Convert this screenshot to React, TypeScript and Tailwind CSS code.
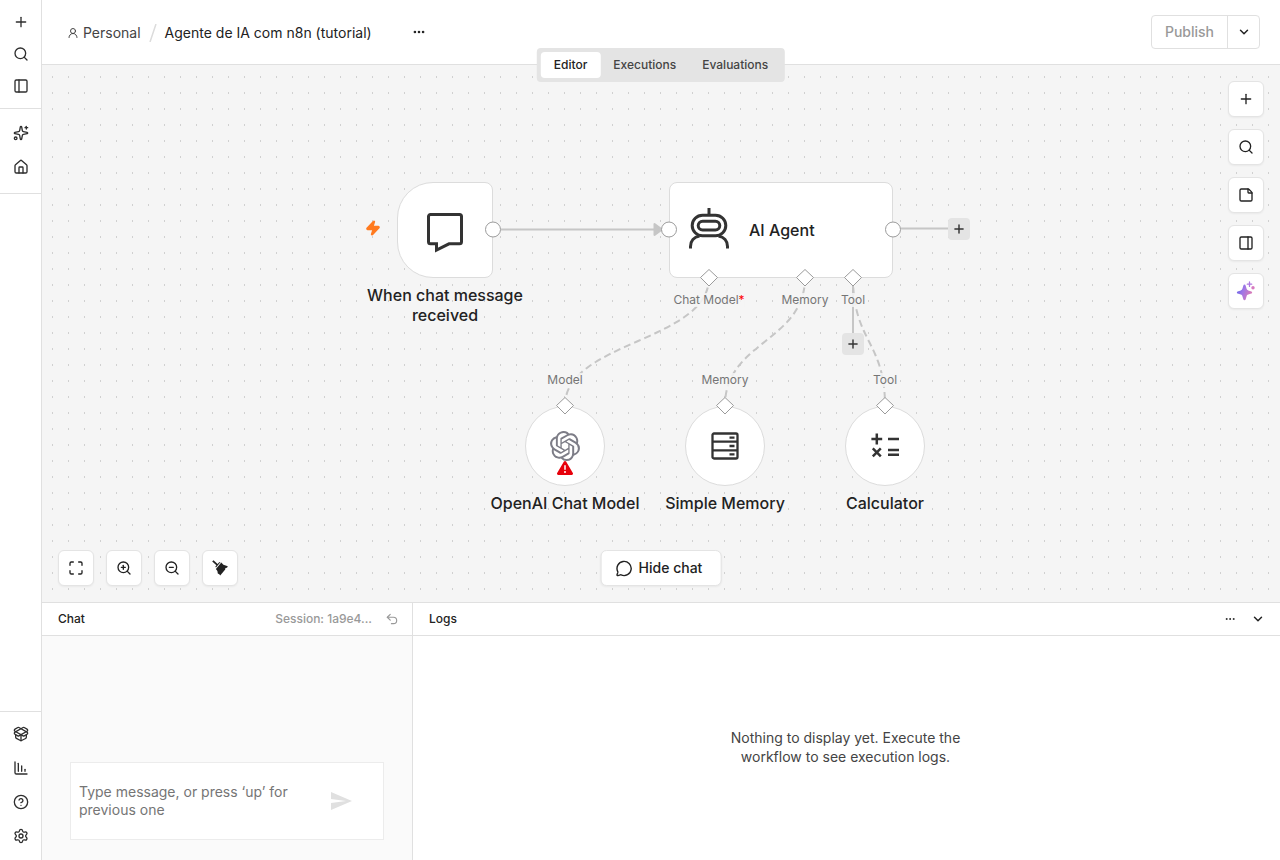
import React from 'react';
import {
  ChartColumnDecreasing,
  ChevronDown,
  CircleHelp,
  Ellipsis,
  House,
  Maximize,
  MessageCircle,
  PackageOpen,
  PanelLeft,
  PanelRight,
  Plus,
  Search,
  Settings,
  Sparkles,
  StickyNote,
  Undo2,
  UserRound,
  Zap,
  ZoomIn,
  ZoomOut,
  type LucideIcon,
} from 'lucide-react';
import { SiOpenai } from 'react-icons/si';
import { FaTriangleExclamation } from 'react-icons/fa6';
import { MdSend } from 'react-icons/md';

function RailButton({ icon: Icon, label }: { icon: LucideIcon; label: string }) {
  return (
    <button type="button" aria-label={label} className="flex size-8 items-center justify-center text-[#2e2e2e]">
      <Icon size={16} strokeWidth={2} />
    </button>
  );
}

function Rail() {
  return (
    <nav aria-label="Main" className="flex w-[42px] shrink-0 flex-col border-r border-[#e0e0e0] bg-white">
      <div className="flex flex-col items-center border-b border-[#e0e0e0] pt-1.5 pb-1.5">
        <RailButton icon={Plus} label="Create" />
        <RailButton icon={Search} label="Search" />
        <RailButton icon={PanelLeft} label="Toggle sidebar" />
      </div>
      <div className="flex flex-col items-center gap-0.5 border-b border-[#e0e0e0] pt-2 pb-2.5">
        <RailButton icon={Sparkles} label="Assistant" />
        <RailButton icon={House} label="Home" />
      </div>
      <div className="grow" />
      <div className="flex flex-col items-center gap-0.5 border-t border-[#e0e0e0] pt-1.5 pb-2">
        <RailButton icon={PackageOpen} label="Templates" />
        <RailButton icon={ChartColumnDecreasing} label="Insights" />
        <RailButton icon={CircleHelp} label="Help" />
        <RailButton icon={Settings} label="Settings" />
      </div>
    </nav>
  );
}

function Header() {
  return (
    <header className="relative z-10 flex h-[65px] shrink-0 items-center border-b border-[#e0e0e0] bg-white pr-5 pl-[25px]">
      <div className="flex items-center pt-0.5">
        <a href="#personal" className="flex items-center gap-1 text-sm text-[#444]">
          <UserRound size={12} strokeWidth={2} />
          Personal
        </a>
        <svg className="mx-2 h-[18px] w-2" viewBox="0 0 8 18" aria-hidden="true">
          <path d="M7 0 L1 18" stroke="#dcdcdc" strokeWidth="1.500" />
        </svg>
        <h1 className="text-sm text-[#222]">Agente de IA com n8n (tutorial)</h1>
      </div>
      <button type="button" aria-label="Workflow actions" className="ml-10 text-[#222]">
        <Ellipsis size={14} strokeWidth={2.5} />
      </button>
      <div className="ml-auto flex h-[34px] rounded border border-[#e0e0e0] text-sm font-medium">
        <button type="button" className="border-r border-[#e0e0e0] px-[13px] text-[#999]">
          Publish
        </button>
        <button type="button" aria-label="Publish options" className="flex w-[31px] items-center justify-center text-[#222]">
          <ChevronDown size={14} strokeWidth={2.5} />
        </button>
      </div>
      <div className="absolute top-12 left-1/2 flex -translate-x-1/2 rounded bg-[#e4e4e4] p-1 text-xs font-medium text-[#444]">
        <button type="button" className="h-[26px] rounded bg-white px-[13px] text-[#222]">
          Editor
        </button>
        <button type="button" className="h-[26px] px-[13px]">
          Executions
        </button>
        <button type="button" className="h-[26px] px-[13px]">
          Evaluations
        </button>
      </div>
    </header>
  );
}

function ToolButton({ label, children }: { label: string; children: React.ReactNode }) {
  return (
    <button
      type="button"
      aria-label={label}
      className="flex size-9 items-center justify-center rounded-md border border-[#e4e4e4] bg-white text-[#222] shadow-xs"
    >
      {children}
    </button>
  );
}

function BroomIcon() {
  return (
    <svg width="16" height="16" viewBox="0 0 16 16" fill="currentColor" aria-hidden="true">
      <path d="M0.200 1.500 1.500 0.200 5.600 3.900 7.200 2.300 8.600 2 4 7.600 3.300 6.700 4.400 5.300Z" />
      <path d="M9.300 2.600 11.400 4.800 15.800 6.200 15 7.700 13.400 7.900 13.200 9.600 8.200 15.600 7.300 14.200 5.800 13.400 5.400 11 3.900 9Z" />
    </svg>
  );
}

function AssistantIcon() {
  return (
    <svg width="20" height="20" viewBox="0 0 20 20" aria-hidden="true">
      <defs>
        <linearGradient id="assistant" x1="0" y1="0" x2="1" y2="0.400">
          <stop offset="0" stopColor="#5b60e8" />
          <stop offset="0.500" stopColor="#a077e6" />
          <stop offset="1" stopColor="#d77bb8" />
        </linearGradient>
      </defs>
      <path
        d="M8.500 3.500c.6 0 .9.400 1.100 1l1 3.300c.3.900.7 1.300 1.600 1.600l3.200 1c1 .3 1 1.900 0 2.200l-3.200 1c-.9.300-1.300.7-1.600 1.600l-1 3.300c-.3 1-1.900 1-2.200 0l-1-3.300c-.3-.9-.7-1.300-1.600-1.600l-3.200-1c-1-.3-1-1.900 0-2.200l3.200-1c.9-.3 1.300-.7 1.600-1.600l1-3.300c.2-.6.500-1 1.100-1Z"
        fill="url(#assistant)"
      />
      <path d="M13.500 1v4.400M11.300 3.200h4.400" stroke="#ae78e0" strokeWidth="1.300" strokeLinecap="round" />
      <circle cx="17" cy="6.800" r="1.700" fill="#d77bc0" />
    </svg>
  );
}

const centers = {
  agentPorts: [667, 763, 811],
  models: [523, 683, 843],
};

function Edges() {
  return (
    <svg className="absolute inset-0 size-full" aria-hidden="true">
      <defs>
        <pattern id="dots" x="10" y="11" width="16" height="16" patternUnits="userSpaceOnUse">
          <rect width="1" height="2" fill="#d0d0d0" />
        </pattern>
      </defs>
      <rect width="100%" height="100%" fill="url(#dots)" />
      <g stroke="#c6c6c6" strokeWidth="2" fill="none">
        <path d="M459 164.500H614" />
        <path d="M859 163.500H906" />
        <path d="M811 221V268" />
        <g strokeDasharray="5 6" strokeLinecap="square">
          <path d="M667 212.500C667 276.500 523 276.500 523 340.500" />
          <path d="M763 212.500C763 276.500 683 276.500 683 340.500" />
          <path d="M811 212.500C811 276.500 843 276.500 843 340.500" />
        </g>
      </g>
      <path d="M612.500 159 620 164.500 612.500 170Z" fill="#c6c6c6" stroke="#c6c6c6" strokeWidth="2" strokeLinejoin="round" />
    </svg>
  );
}

function Ports() {
  return (
    <svg className="pointer-events-none absolute inset-0 size-full" aria-hidden="true">
      <g fill="#fff" stroke="#9b9b9b">
        {[451, 627, 851].map((x) => (
          <circle key={x} cx={x} cy="164.500" r="7.500" />
        ))}
        {centers.agentPorts.map((x) => (
          <path key={x} d={`M${x} 204.500l8.500 8-8.500 8.500-8.500-8.500Z`} />
        ))}
        {centers.models.map((x) => (
          <path key={x} d={`M${x} 332.500l8.500 8-8.500 8.500-8.500-8.500Z`} />
        ))}
      </g>
    </svg>
  );
}

function PortLabel({ className, children }: { className: string; children: React.ReactNode }) {
  return (
    <span className={`absolute -translate-x-1/2 bg-[#f5f5f5]/85 text-xs leading-[14px] whitespace-nowrap text-[#757575] ${className}`}>
      {children}
    </span>
  );
}

function AddNode({ className }: { className: string }) {
  return (
    <button
      type="button"
      aria-label="Add node"
      className={`absolute flex size-[22px] items-center justify-center rounded bg-[#e4e4e4] text-[#333] ${className}`}
    >
      <Plus size={14} strokeWidth={2.5} />
    </button>
  );
}

function SubNode({ className, name, children }: { className: string; name: string; children: React.ReactNode }) {
  return (
    <div className={`absolute top-[341px] flex w-40 -translate-x-1/2 flex-col items-center gap-[7px] ${className}`}>
      <div className="relative flex size-20 items-center justify-center rounded-full border border-[#dcdcdc] bg-white">{children}</div>
      <span className="text-base leading-5 font-medium whitespace-nowrap text-[#222]">{name}</span>
    </div>
  );
}

function Canvas() {
  return (
    <main className="relative min-h-0 grow overflow-hidden bg-[#f5f5f5]">
      <Edges />

      <Zap className="absolute top-[155px] left-[323px] text-[#ff7a1f]" size={16} fill="currentColor" strokeWidth={2.5} />
      <div className="absolute top-[117px] left-[323px] flex w-40 flex-col items-center gap-[7px]">
        <div className="flex size-24 items-center justify-center rounded-l-[36px] rounded-r-lg border border-[#dcdcdc] bg-white">
          <svg width="40" height="46" viewBox="0 0 40 46" fill="none" stroke="#333" strokeWidth="3" aria-hidden="true">
            <path d="M5.500 7.500h29a2 2 0 0 1 2 2v25.300a2 2 0 0 1-2 2H24L11.500 43V36.800H5.500a2 2 0 0 1-2-2V9.500a2 2 0 0 1 2-2Z" />
          </svg>
        </div>
        <span className="text-center text-base leading-5 font-medium text-[#222]">When chat message received</span>
      </div>

      <div className="absolute top-[117px] left-[627px] flex h-24 w-56 items-center gap-5 rounded-lg border border-[#dcdcdc] bg-white pl-[19px]">
        <svg width="40" height="44" viewBox="0 0 40 44" fill="none" stroke="#333" strokeWidth="3" aria-hidden="true">
          <path d="M20 0v7" />
          <rect x="3.200" y="7.200" width="33.600" height="20.600" rx="10.300" />
          <rect x="9.200" y="13.200" width="21.600" height="8.800" rx="4.400" />
          <path d="M1.500 40.500v-2c0-5.500 3.500-9.500 9-10.500M38.500 40.500v-2c0-5.500-3.500-9.500-9-10.500" />
        </svg>
        <span className="text-base font-medium text-[#222]">AI Agent</span>
      </div>

      <PortLabel className="top-[228px] left-[667px]">
        Chat Model<span className="text-[#f00]">*</span>
      </PortLabel>
      <PortLabel className="top-[228px] left-[763px]">Memory</PortLabel>
      <PortLabel className="top-[228px] left-[811px]">Tool</PortLabel>
      <PortLabel className="top-[308px] left-[523px]">Model</PortLabel>
      <PortLabel className="top-[308px] left-[683px]">Memory</PortLabel>
      <PortLabel className="top-[308px] left-[843px]">Tool</PortLabel>
      <AddNode className="top-[153px] left-[906px]" />
      <AddNode className="top-[268px] left-[800px]" />

      <SubNode className="left-[523px]" name="OpenAI Chat Model">
        <SiOpenai size={30} color="#7d7d87" />
        <FaTriangleExclamation className="absolute top-[53px]" size={16} color="#e7000b" />
      </SubNode>
      <SubNode className="left-[683px]" name="Simple Memory">
        <svg width="28" height="28" viewBox="0 0 28 28" fill="none" stroke="#333" strokeWidth="2.300" aria-hidden="true">
          <rect x="1.500" y="1.500" width="25" height="25" rx="1.500" />
          <path d="M1 9.700h26M1 18.300h26M18.500 5.600h5M18.500 14h5M18.500 22.400h5" />
        </svg>
      </SubNode>
      <SubNode className="left-[843px]" name="Calculator">
        <svg width="28" height="28" viewBox="0 0 28 28" fill="none" stroke="#333" strokeWidth="2.500" aria-hidden="true">
          <path d="M0.400 7h10.800M5.800 1.600v10.800M17 7h11M1.800 16.300l8 8M9.800 16.300l-8 8M17 18h11M17 22.800h11" />
        </svg>
      </SubNode>
      <Ports />

      <div className="absolute top-4 right-4 flex flex-col gap-3">
        <ToolButton label="Add node">
          <Plus size={16} strokeWidth={2} />
        </ToolButton>
        <ToolButton label="Search nodes">
          <Search size={16} strokeWidth={2} />
        </ToolButton>
        <ToolButton label="Add sticky note">
          <StickyNote size={16} strokeWidth={2} />
        </ToolButton>
        <ToolButton label="Toggle panel">
          <PanelRight size={16} strokeWidth={2} />
        </ToolButton>
        <ToolButton label="Ask assistant">
          <AssistantIcon />
        </ToolButton>
      </div>

      <div className="absolute bottom-4 left-4 flex gap-3">
        <ToolButton label="Fit view">
          <Maximize size={16} strokeWidth={2} />
        </ToolButton>
        <ToolButton label="Zoom in">
          <ZoomIn size={16} strokeWidth={2} />
        </ToolButton>
        <ToolButton label="Zoom out">
          <ZoomOut size={16} strokeWidth={2} />
        </ToolButton>
        <ToolButton label="Tidy up">
          <BroomIcon />
        </ToolButton>
      </div>

      <button
        type="button"
        className="absolute bottom-4 left-1/2 flex h-9 -translate-x-1/2 items-center gap-1.5 rounded-md border border-[#e4e4e4] bg-white pr-[18px] pl-3.5 text-sm font-medium text-[#222] shadow-xs"
      >
        <MessageCircle size={17} strokeWidth={2} />
        Hide chat
      </button>
    </main>
  );
}

function ChatPanel() {
  return (
    <section className="flex w-[371px] shrink-0 flex-col border-r border-[#e0e0e0]">
      <div className="flex h-[33px] shrink-0 items-center border-b border-[#e0e0e0] pr-[13px] pl-4 text-xs font-medium">
        <h2 className="text-[#222]">Chat</h2>
        <span className="ml-auto text-[#999]">Session: 1a9e4...</span>
        <button type="button" aria-label="Reset session" className="ml-[13px] text-[#999]">
          <Undo2 size={14} strokeWidth={2} />
        </button>
      </div>
      <div className="flex grow flex-col justify-end bg-[#fafafa] px-7 pb-5">
        <form className="flex h-[78px] items-center border border-[#ececec] bg-white pr-[30px] pl-2">
          <textarea
            aria-label="Message"
            rows={2}
            placeholder="Type message, or press ‘up’ for previous one"
            className="min-w-0 grow resize-none overflow-hidden text-sm leading-[18px] outline-none placeholder:text-[#757575]"
          />
          <button type="button" aria-label="Send" className="text-[#e0e0e0]">
            <MdSend size={24} />
          </button>
        </form>
      </div>
    </section>
  );
}

function LogsPanel() {
  return (
    <section className="flex min-w-0 grow flex-col">
      <div className="flex h-[33px] shrink-0 items-center gap-[15px] border-b border-[#e0e0e0] pr-[15px] pl-4 text-[#222]">
        <h2 className="text-xs font-medium">Logs</h2>
        <button type="button" aria-label="Log options" className="ml-auto">
          <Ellipsis size={12} strokeWidth={2} />
        </button>
        <button type="button" aria-label="Collapse panel">
          <ChevronDown size={14} strokeWidth={2.5} />
        </button>
      </div>
      <div className="flex grow items-center justify-center pr-0.5 pb-0.5">
        <p className="w-60 text-center text-sm leading-[19px] text-[#444]">
          Nothing to display yet. Execute the workflow to see execution logs.
        </p>
      </div>
    </section>
  );
}

export default function App() {
  return (
    <div className="flex h-screen bg-white font-['Inter',sans-serif]">
      <Rail />
      <div className="flex min-w-0 grow flex-col">
        <Header />
        <Canvas />
        <div className="flex h-[258px] shrink-0 border-t border-[#e0e0e0] bg-white">
          <ChatPanel />
          <LogsPanel />
        </div>
      </div>
    </div>
  );
}
